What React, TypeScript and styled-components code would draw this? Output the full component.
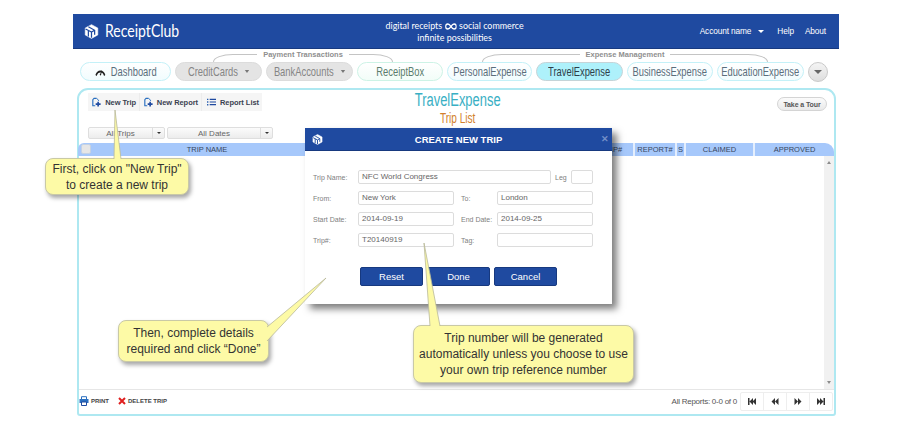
import { FC, ReactNode } from "react";
import styled, { createGlobalStyle, css } from "styled-components";

const GlobalStyle = createGlobalStyle`
    html, body {
        margin: 0;
        padding: 0;
        background: #fff;
        font-family: "Liberation Sans", Arial, sans-serif;
    }
    * {
        box-sizing: border-box;
    }
`;

const Page = styled.div`
    position: relative;
    width: 910px;
    height: 430px;
    padding: 14px 71px 0 73px;
    overflow: hidden;
`;

/* header */
const Header = styled.header`
    height: 35px;
    background: #1f4aa0;
    border-bottom: 1px solid #17397f;
    display: grid;
    grid-template-columns: 1fr auto 1fr;
    align-items: center;
    padding: 0 13px 0 11px;
    color: #fff;
`;

const Brand = styled.div`
    display: flex;
    align-items: center;
    gap: 6px;
`;

const BrandName = styled.span`
    font-family: Lato, sans-serif;
    font-size: 16.5px;
    font-weight: 400;
    transform: scaleX(0.85);
    transform-origin: left center;
`;

const Tagline = styled.div`
    font-family: Lato, sans-serif;
    font-size: 10px;
    line-height: 12px;
    text-align: center;
    white-space: nowrap;
    transform: scaleX(0.89);
`;

const HeaderLinks = styled.nav`
    display: flex;
    justify-content: flex-end;
    align-items: center;
    gap: 11px;
    font-size: 8.3px;
    letter-spacing: -0.12px;
`;

const AccountLink = styled.span`
    display: flex;
    align-items: center;
    gap: 7px;
    margin-right: 2px;
`;

const Caret = styled.i<{ $color?: string; $size?: number }>`
    display: block;
    width: 0;
    height: 0;
    border-left: ${(p) => p.$size ?? 3}px solid transparent;
    border-right: ${(p) => p.$size ?? 3}px solid transparent;
    border-top: ${(p) => p.$size ?? 3}px solid ${(p) => p.$color ?? "#fff"};
`;

/* top navigation */
const NavArea = styled.div`
    position: relative;
    height: 39px;
    padding: 13px 0 0 7px;
`;

const PillRow = styled.div`
    display: flex;
    gap: 4px;
`;

type Tone = "blue" | "gray" | "green" | "active";

const toneStyles: Record<Tone, ReturnType<typeof css>> = {
    blue: css`
        background: linear-gradient(#fff, #f1fcfe);
        border-color: #c4f1f8;
        color: #5b6e7c;
    `,
    gray: css`
        background: #e4e4e4;
        border-color: #dcdcdc;
        color: #858585;
    `,
    green: css`
        background: linear-gradient(#fff, #f2fdf8);
        border-color: #cdf3e6;
        color: #5a7d6c;
    `,
    active: css`
        background: #aef1fb;
        border-color: #c5d4d8;
        color: #2c3e4a;
    `,
};

const Pill = styled.div<{ $tone: Tone; $width: number }>`
    flex: none;
    width: ${(p) => p.$width}px;
    height: 19px;
    border: 1px solid;
    border-radius: 10px;
    display: flex;
    align-items: center;
    justify-content: center;
    ${(p) => toneStyles[p.$tone]}
`;

/* the reference uses an Arial Narrow look, which is not installed */
const PillInner = styled.span<{ $gap?: number }>`
    flex: none;
    display: inline-flex;
    align-items: center;
    gap: ${(p) => p.$gap ?? 0}px;
    font-size: 13px;
    white-space: nowrap;
    transform: scaleX(0.72);
`;

const MoreButton = styled.div`
    flex: none;
    width: 20px;
    height: 20px;
    border-radius: 50%;
    border: 1px solid #c9c9c9;
    background: linear-gradient(#f4f4f4, #dedede);
    display: flex;
    align-items: center;
    justify-content: center;
`;

const Bracket = styled.div<{ $left: number; $width: number }>`
    position: absolute;
    top: 5px;
    left: ${(p) => p.$left}px;
    width: ${(p) => p.$width}px;
    height: 8px;
    border: 1px solid #c4c4c4;
    border-bottom: 0;
    border-radius: 20px 20px 0 0 / 8px 8px 0 0;
    display: flex;
    justify-content: center;
`;

const BracketLabel = styled.span`
    margin-top: -5px;
    height: 9px;
    padding: 0 6px;
    background: #fff;
    font-size: 7.5px;
    line-height: 9px;
    font-weight: bold;
    color: #8f8f8f;
    white-space: nowrap;
`;

/* main panel */
const Panel = styled.section`
    height: 328px;
    margin-left: 4px;
    margin-right: 3px;
    border: 2px solid #aee8f1;
    border-radius: 11px 11px 3px 3px;
    display: flex;
    flex-direction: column;
`;

const TopBar = styled.div`
    height: 37px;
    display: grid;
    grid-template-columns: 1fr auto 1fr;
    padding: 3px 7px 0 9px;
`;

const Toolbar = styled.div`
    display: flex;
    align-self: start;
    width: 174px;
    height: 18px;
    background: #f5f5f5;
`;

const ToolItem = styled.div<{ $width: number }>`
    width: ${(p) => p.$width}px;
    display: flex;
    align-items: center;
    justify-content: flex-end;
    gap: 4px;
    padding-right: 3px;
    font-size: 7.5px;
    font-weight: bold;
    letter-spacing: -0.05px;
    white-space: nowrap;
    color: #3a4250;
    border-right: 1px solid #ececec;
    &:last-child {
        border-right: 0;
    }
`;

const Titles = styled.div`
    text-align: center;
    white-space: nowrap;
    transform: scaleX(0.72);
`;

const PageTitle = styled.div`
    font-size: 18px;
    line-height: 18px;
    margin-top: -2px;
    color: #39afc4;
`;

const SubTitle = styled.div`
    font-size: 14px;
    line-height: 14px;
    margin-top: 2px;
    color: #d27f2c;
`;

const TourButton = styled.div`
    justify-self: end;
    margin-top: 4px;
    width: 50px;
    height: 14px;
    border: 1px solid #d4d4d4;
    border-radius: 7px;
    background: linear-gradient(#fbfbfb, #e9e9e9);
    display: flex;
    align-items: center;
    justify-content: center;
    font-size: 7px;
    font-weight: bold;
    letter-spacing: -0.1px;
    color: #555;
`;

const Filters = styled.div`
    height: 16px;
    display: flex;
    gap: 2px;
    padding-left: 9px;
`;

const Select = styled.div<{ $width: number }>`
    width: ${(p) => p.$width}px;
    height: 12px;
    border: 1px solid #dedede;
    border-radius: 2px;
    background: linear-gradient(#fbfbfb, #ececec);
    display: grid;
    grid-template-columns: 1fr 12px;
    align-items: stretch;
    font-size: 8px;
    color: #666;
`;

const SelectLabel = styled.span`
    display: flex;
    align-items: center;
    justify-content: center;
`;

const SelectArrow = styled.span`
    display: flex;
    align-items: center;
    justify-content: center;
    border-left: 1px solid #dedede;
`;

const TableHead = styled.div`
    height: 13px;
    margin-left: -1px;
    background: #a6c8fb;
    border-radius: 6px 9px 0 0;
    display: grid;
    grid-template-columns: 14px 232px 1fr 45px 42px 9px 69px 79px;
    font-size: 7.5px;
    color: #36465e;
`;

const HeadCell = styled.div`
    display: flex;
    align-items: center;
    justify-content: center;
    border-right: 2px solid #e4eefd;
    &:last-child {
        border-right: 0;
    }
`;

const HeadCheck = styled.div`
    width: 10px;
    height: 10px;
    margin: 1px 0 0 3px;
    border: 1px solid #c5d2e4;
    border-radius: 2px;
    background: #e6e6e6;
`;

const TableBody = styled.div`
    flex: 1;
    display: flex;
    justify-content: flex-end;
`;

const Scrollbar = styled.div`
    width: 10px;
    background: #f1f1f1;
    display: flex;
    flex-direction: column;
    justify-content: space-between;
    align-items: center;
    padding: 5px 0;
`;

const ScrollUp = styled.i`
    width: 0;
    height: 0;
    border-left: 2.5px solid transparent;
    border-right: 2.5px solid transparent;
    border-bottom: 3px solid #8c8c8c;
`;

const ScrollDown = styled(ScrollUp)`
    border-bottom: 0;
    border-top: 3px solid #8c8c8c;
`;

const Footer = styled.footer`
    height: 25px;
    border-top: 1px solid #e6e6e6;
    display: flex;
    align-items: center;
    padding: 0 1px 2px 0;
`;

const FooterAction = styled.div`
    display: flex;
    align-items: center;
    gap: 2px;
    margin-right: 9px;
    font-size: 6px;
    font-weight: bold;
    color: #444;
`;

const PagerInfo = styled.div`
    margin-left: auto;
    margin-right: 3px;
    font-size: 8px;
    letter-spacing: -0.25px;
    color: #555;
`;

const Pager = styled.div`
    display: flex;
    width: 93px;
    height: 19px;
    border: 1px solid #eee;
    border-radius: 2px;
`;

const PagerButton = styled.div`
    flex: 1;
    display: flex;
    align-items: center;
    justify-content: center;
    border-right: 1px solid #eee;
    &:last-child {
        border-right: 0;
    }
`;

/* create trip dialog, floats over the panel */
const Modal = styled.div`
    position: absolute;
    left: 305px;
    top: 128px;
    width: 307px;
    height: 176px;
    background: #fff;
    box-shadow: 5px 5px 7px rgba(0, 0, 0, 0.5);
`;

const ModalHeader = styled.div`
    height: 23px;
    background: #1f4aa0;
    border-bottom: 1px solid #17397f;
    display: grid;
    grid-template-columns: 20px 1fr 20px;
    align-items: center;
    padding: 0 7px;
    color: #fff;
    font-size: 9.5px;
    font-weight: bold;
    text-align: center;
`;

const ModalClose = styled.span`
    justify-self: end;
    margin-right: -4px;
    color: #7390c8;
    font-size: 9px;
`;

const ModalBody = styled.div`
    padding: 19px 19px 0 8px;
`;

const NameRow = styled.div`
    display: grid;
    grid-template-columns: 45px 193px 20px 22px;
    align-items: center;
    margin-bottom: 7px;
`;

const FieldGrid = styled.div`
    display: grid;
    grid-template-columns: 45px 96px 43px 96px;
    grid-auto-rows: 14px;
    row-gap: 7px;
    align-items: center;
`;

const FieldLabel = styled.span<{ $pad?: number }>`
    font-size: 7px;
    color: #808080;
    white-space: nowrap;
    padding-left: ${(p) => p.$pad ?? 0}px;
`;

const Field = styled.div`
    height: 14px;
    border: 1px solid #dcdcdc;
    border-radius: 2px;
    padding: 0 3px;
    font-size: 8px;
    line-height: 11px;
    color: #666;
`;

const ModalActions = styled.div`
    display: flex;
    gap: 4px;
    margin: 20px 0 0 47px;
`;

const ModalButton = styled.div`
    width: 63px;
    height: 19px;
    background: #1f4aa0;
    border: 1px solid #17397f;
    border-radius: 2px;
    display: flex;
    align-items: center;
    justify-content: center;
    color: #fff;
    font-size: 9.5px;
`;

/* help callouts, float over everything */
const Callout = styled.div<{ $left: number; $top: number; $width: number; $height: number }>`
    position: absolute;
    left: ${(p) => p.$left}px;
    top: ${(p) => p.$top}px;
    width: ${(p) => p.$width}px;
    height: ${(p) => p.$height}px;
    background: #fdfaa6;
    border: 1px solid #c9c9a6;
    border-radius: 8px;
    box-shadow: 2px 3px 4px rgba(0, 0, 0, 0.35);
    display: flex;
    align-items: center;
    justify-content: center;
    text-align: center;
    font-size: 12px;
    line-height: 16px;
    color: #333;
`;

const Tail = styled.svg`
    position: absolute;
    left: 0;
    top: 0;
    pointer-events: none;
`;

const LogoMark: FC<{ size: number }> = ({ size }) => (
    <svg width={size} height={size} viewBox="0 0 24 24">
        <path d="M12 1 22 6.500V17.500L12 23 2 17.500V6.500Z" fill="#fff" stroke="#fff" strokeLinejoin="round" />
        <path d="M7 4.500 17 10v7M2.500 8 12 13l5-3M12 13v9M7 20v-9.500" fill="none" stroke="#1f4aa0" strokeWidth="2" />
    </svg>
);

const InfinityMark: FC = () => (
    <svg width="13" height="7" viewBox="0 0 13 7" style={{ margin: "0 3px", verticalAlign: "-0.5px" }}>
        <path d="M6.500 3.500C5 1.500 4 1 3 1a2.500 2.500 0 0 0 0 5c1 0 2-.5 3.500-2.500S9 1 10 1a2.500 2.500 0 0 1 0 5C9 6 8 5.500 6.500 3.500Z" fill="none" stroke="#fff" strokeWidth="1.400" />
    </svg>
);

const GaugeIcon: FC = () => (
    <svg width="15" height="9" viewBox="0 0 15 9">
        <path d="M1.500 8.500a6.500 6.500 0 0 1 12 0" fill="none" stroke="#222" strokeWidth="2" />
        <path d="M6.500 8 10 2.500 8.300 8.500Z" fill="#222" />
    </svg>
);

const PlusDocIcon: FC = () => (
    <svg width="9" height="11" viewBox="0 0 11 12">
        <path d="M5.500 1H2.500L1 2.500v7.500h3" fill="none" stroke="#2a6fc0" strokeWidth="1.400" />
        <path d="M5.500 1 8 3v1" fill="none" stroke="#2a6fc0" strokeWidth="1.200" />
        <path d="M7.500 5v6M4.500 8h6" stroke="#1f4aa0" strokeWidth="2" />
    </svg>
);

const ListIcon: FC = () => (
    <svg width="9" height="8" viewBox="0 0 10 8">
        <path d="M0 1h1.500M0 4h1.500M0 7h1.500" stroke="#2a5fb0" strokeWidth="1.500" />
        <path d="M3 1h7M3 4h7M3 7h7" stroke="#1f4aa0" strokeWidth="1.300" />
    </svg>
);

const PrinterIcon: FC = () => (
    <svg width="10" height="10" viewBox="0 0 10 10">
        <path d="M2.500 3V.7h5V3" fill="none" stroke="#2a6fc0" strokeWidth="1" />
        <path d="M.5 3h9v4H.5Z" fill="#2a6fc0" />
        <path d="M2.500 6h5v3.500h-5Z" fill="#fff" stroke="#1f4aa0" strokeWidth="1" />
    </svg>
);

const CrossIcon: FC = () => (
    <svg width="8" height="8" viewBox="0 0 8 8">
        <path d="M1 1 7 7M7 1 1 7" stroke="#e01f1f" strokeWidth="2" />
    </svg>
);

const PagerIcon: FC<{ d: string }> = ({ d }) => (
    <svg width="8" height="7" viewBox="0 0 8 7">
        <path d={d} fill="#333" />
    </svg>
);

const pagerIcons = [
    "M0 0h1.500v7H0ZM5 0v7L1.500 3.500ZM8 0v7L4.500 3.500Z",
    "M4 0v7L.5 3.500ZM7.500 0v7L4 3.500Z",
    "M.5 0v7L4 3.500ZM4 0v7l3.500-3.500Z",
    "M0 0v7l3.500-3.500ZM3 0v7l3.500-3.500ZM6.500 0H8v7H6.500Z",
];

const FieldCell: FC<{ children?: ReactNode }> = ({ children }) => <Field>{children}</Field>;

export default function App() {
    return (
        <Page>
            <GlobalStyle />
            <Header>
                <Brand>
                    <LogoMark size={15} />
                    <BrandName>ReceiptClub</BrandName>
                </Brand>
                <Tagline>
                    digital receipts<InfinityMark />social commerce
                    <br />
                    infinite possibilities
                </Tagline>
                <HeaderLinks>
                    <AccountLink>
                        Account name <Caret />
                    </AccountLink>
                    <span>Help</span>
                    <span>About</span>
                </HeaderLinks>
            </Header>

            <NavArea>
                <Bracket $left={140} $width={180}>
                    <BracketLabel>Payment Transactions</BracketLabel>
                </Bracket>
                <Bracket $left={409} $width={286}>
                    <BracketLabel>Expense Management</BracketLabel>
                </Bracket>
                <PillRow>
                    <Pill $tone="blue" $width={91}>
                        <PillInner $gap={7}>
                            <GaugeIcon />
                            Dashboard
                        </PillInner>
                    </Pill>
                    <Pill $tone="gray" $width={87}>
                        <PillInner $gap={10}>
                            CreditCards <Caret $color="#777" />
                        </PillInner>
                    </Pill>
                    <Pill $tone="gray" $width={87}>
                        <PillInner $gap={10}>
                            BankAccounts <Caret $color="#777" />
                        </PillInner>
                    </Pill>
                    <Pill $tone="green" $width={86}>
                        <PillInner>ReceiptBox</PillInner>
                    </Pill>
                    <Pill $tone="blue" $width={85}>
                        <PillInner>PersonalExpense</PillInner>
                    </Pill>
                    <Pill $tone="active" $width={87}>
                        <PillInner>TravelExpense</PillInner>
                    </Pill>
                    <Pill $tone="blue" $width={86}>
                        <PillInner>BusinessExpense</PillInner>
                    </Pill>
                    <Pill $tone="blue" $width={87}>
                        <PillInner>EducationExpense</PillInner>
                    </Pill>
                    <MoreButton>
                        <Caret $color="#666" $size={4} />
                    </MoreButton>
                </PillRow>
            </NavArea>

            <Panel>
                <TopBar>
                    <Toolbar>
                        <ToolItem $width={52}>
                            <PlusDocIcon />
                            New Trip
                        </ToolItem>
                        <ToolItem $width={62}>
                            <PlusDocIcon />
                            New Report
                        </ToolItem>
                        <ToolItem $width={60}>
                            <ListIcon />
                            Report List
                        </ToolItem>
                    </Toolbar>
                    <Titles>
                        <PageTitle>TravelExpense</PageTitle>
                        <SubTitle>Trip List</SubTitle>
                    </Titles>
                    <TourButton>Take a Tour</TourButton>
                </TopBar>

                <Filters>
                    <Select $width={77}>
                        <SelectLabel>All Trips</SelectLabel>
                        <SelectArrow>
                            <Caret $color="#333" $size={2.5} />
                        </SelectArrow>
                    </Select>
                    <Select $width={106}>
                        <SelectLabel>All Dates</SelectLabel>
                        <SelectArrow>
                            <Caret $color="#333" $size={2.5} />
                        </SelectArrow>
                    </Select>
                </Filters>

                <TableHead>
                    <HeadCheck />
                    <HeadCell>TRIP NAME</HeadCell>
                    <HeadCell />
                    <HeadCell>TRIP#</HeadCell>
                    <HeadCell>REPORT#</HeadCell>
                    <HeadCell>S</HeadCell>
                    <HeadCell>CLAIMED</HeadCell>
                    <HeadCell>APPROVED</HeadCell>
                </TableHead>

                <TableBody>
                    <Scrollbar>
                        <ScrollUp />
                        <ScrollDown />
                    </Scrollbar>
                </TableBody>

                <Footer>
                    <FooterAction>
                        <PrinterIcon />
                        PRINT
                    </FooterAction>
                    <FooterAction>
                        <CrossIcon />
                        DELETE TRIP
                    </FooterAction>
                    <PagerInfo>All Reports: 0-0 of 0</PagerInfo>
                    <Pager>
                        {pagerIcons.map((d) => (
                            <PagerButton key={d}>
                                <PagerIcon d={d} />
                            </PagerButton>
                        ))}
                    </Pager>
                </Footer>
            </Panel>

            <Modal>
                <ModalHeader>
                    <LogoMark size={11} />
                    CREATE NEW TRIP
                    <ModalClose>✕</ModalClose>
                </ModalHeader>
                <ModalBody>
                    <NameRow>
                        <FieldLabel>Trip Name:</FieldLabel>
                        <FieldCell>NFC World Congress</FieldCell>
                        <FieldLabel $pad={4}>Leg</FieldLabel>
                        <FieldCell />
                    </NameRow>
                    <FieldGrid>
                        <FieldLabel>From:</FieldLabel>
                        <FieldCell>New York</FieldCell>
                        <FieldLabel $pad={7}>To:</FieldLabel>
                        <FieldCell>London</FieldCell>
                        <FieldLabel>Start Date:</FieldLabel>
                        <FieldCell>2014-09-19</FieldCell>
                        <FieldLabel $pad={7}>End Date:</FieldLabel>
                        <FieldCell>2014-09-25</FieldCell>
                        <FieldLabel>Trip#:</FieldLabel>
                        <FieldCell>T20140919</FieldCell>
                        <FieldLabel $pad={7}>Tag:</FieldLabel>
                        <FieldCell />
                    </FieldGrid>
                    <ModalActions>
                        <ModalButton>Reset</ModalButton>
                        <ModalButton>Done</ModalButton>
                        <ModalButton>Cancel</ModalButton>
                    </ModalActions>
                </ModalBody>
            </Modal>

            <Callout $left={45} $top={158} $width={144} $height={37}>
                First, click on "New Trip"
                <br />
                to create a new trip
            </Callout>
            <Callout $left={118} $top={320} $width={151} $height={42}>
                Then, complete details
                <br />
                required and click “Done”
            </Callout>
            <Callout $left={413} $top={325} $width={221} $height={58}>
                Trip number will be generated
                <br />
                automatically unless you choose to use
                <br />
                your own trip reference number
            </Callout>

            <Tail width="910" height="430">
                <path d="M114 159 L115 110 L121 159" fill="#fdfaa6" stroke="#b9b99a" strokeWidth="0.8" />
                <path d="M267 327 L326 278 L267 341" fill="#fdfaa6" stroke="#b9b99a" strokeWidth="0.8" />
                <path d="M430 326 L424 243 L440 326" fill="#fdfaa6" stroke="#b9b99a" strokeWidth="0.8" />
            </Tail>
        </Page>
    );
}
